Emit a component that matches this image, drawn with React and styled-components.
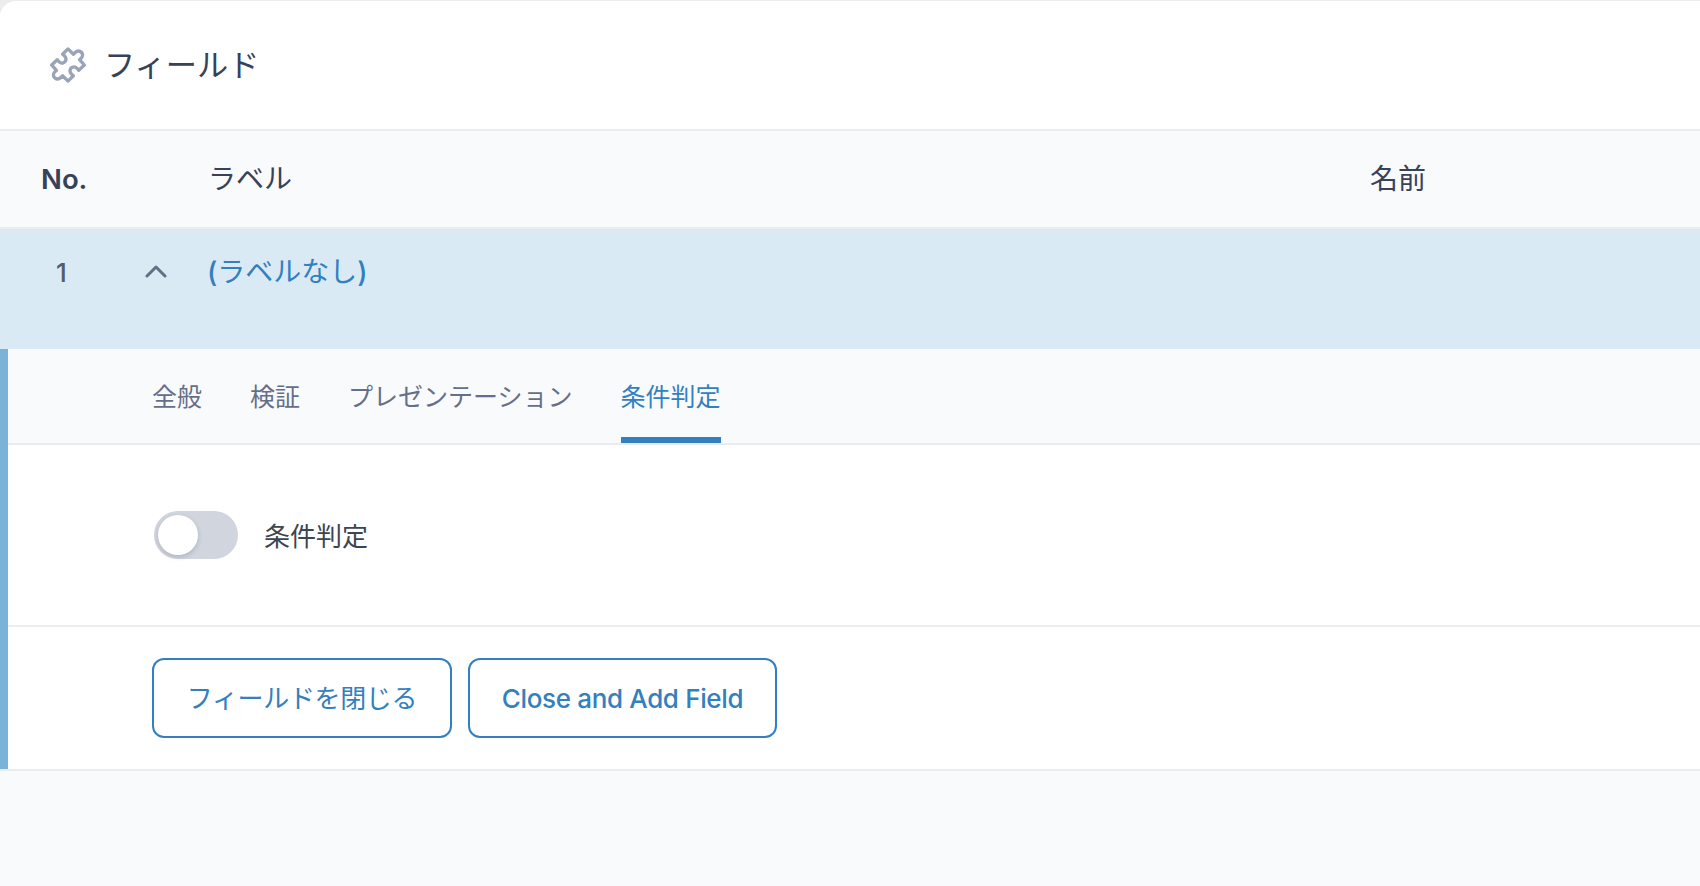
import React from "react";
import styled, { createGlobalStyle } from "styled-components";

const GlobalStyle = createGlobalStyle`
  * { box-sizing: border-box; }
  body {
    margin: 0;
    background: #ececed;
    font-family: Inter, "Noto Sans CJK JP", sans-serif;
    color: #374258;
  }
`;

const Page = styled.div`
  height: 886px;
  padding-top: 1px;
  overflow: hidden;
`;

const Panel = styled.section`
  height: 885px;
  background: #f9fafc;
  border-top-left-radius: 16px;
  overflow: hidden;
`;

const PanelHeader = styled.header`
  display: flex;
  align-items: center;
  gap: 18px;
  height: 130px;
  padding-left: 50px;
  background: #fff;
  border-bottom: 2px solid #eaecf0;
`;

const Title = styled.h2`
  margin: 0;
  font-size: 31.2px;
  font-weight: 400;
  line-height: 40px;
`;

const TableHead = styled.div`
  display: grid;
  grid-template-columns: 208px 1162px 1fr;
  align-items: center;
  height: 98px;
  border-bottom: 2px solid #eaecf0;
  font-size: 28px;
`;

const NumberHeading = styled.div`
  padding-left: 41px;
  font-size: 27.5px;
  font-weight: 600;
`;

const Heading = styled.div`
  padding-bottom: 5px;
`;

const FieldRow = styled.div`
  display: grid;
  grid-template-columns: 145px 62px 1fr;
  align-items: center;
  height: 120px;
  padding-bottom: 37px;
  background: #daeaf5;
`;

const RowNumber = styled.div`
  padding: 4px 0 0 56px;
  color: #555d66;
  font-size: 26px;
  font-weight: 500;
`;

const FieldLabel = styled.div`
  padding-bottom: 2px;
  color: #3380c0;
  font-size: 28px;
  font-weight: 500;

  span { font-weight: 400; }
`;

const Editor = styled.div`
  height: 420px;
  background: #fff;
  border-left: 8px solid #7ab2d8;
`;

const Tabs = styled.nav`
  display: flex;
  gap: 48px;
  height: 96px;
  padding-left: 144px;
  background: #f9fafc;
  border-bottom: 2px solid #e9ebef;
`;

const Tab = styled.div`
  height: 94px;
  padding-top: 29px;
  border-bottom: 6px solid ${({ $active }) => ($active ? "#3380c0" : "transparent")};
  color: ${({ $active }) => ($active ? "#3380c0" : "#656f88")};
  font-size: 25px;
  line-height: 38px;
`;

const Settings = styled.div`
  display: flex;
  align-items: flex-start;
  gap: 26px;
  height: 182px;
  padding: 66px 0 0 146px;
  border-bottom: 2px solid #eaecf0;
`;

const Switch = styled.div`
  width: 84px;
  height: 48px;
  padding: 4px;
  border-radius: 24px;
  background: #d0d5de;
`;

const Knob = styled.div`
  width: 40px;
  height: 40px;
  border-radius: 50%;
  background: #fff;
  box-shadow: 0 2px 5px rgba(40, 50, 70, 0.2);
`;

const SwitchLabel = styled.div`
  padding-top: 6px;
  color: #3c4550;
  font-size: 26px;
  line-height: 40px;
`;

const Actions = styled.div`
  display: flex;
  gap: 16px;
  padding: 31px 0 0 144px;
`;

const ActionButton = styled.button`
  width: ${({ $width }) => $width}px;
  height: 80px;
  padding: 0 0 ${({ $lift }) => $lift || 0}px;
  border: 2px solid #3380c0;
  border-radius: 12px;
  background: #fff;
  color: #3380c0;
  font-family: inherit;
  font-size: 26px;
  font-weight: ${({ $weight }) => $weight};
  letter-spacing: -0.35px;
`;

const Footer = styled.div`
  height: 117px;
  border-top: 2px solid #eaecf0;
`;

function PuzzleIcon() {
  return (
    <svg width="36" height="36" viewBox="0 0 36 36" fill="none" stroke="#9aa4b8" strokeWidth="3.3" strokeLinejoin="round">
      <path d="M18 1.9L23.4 7.2L25.5 5.2A4.2 4.2 0 0 1 32.6 8.2C32.6 10.2 31.2 11.2 29.6 12.6L34.3 18L28.8 23.3L26.8 21.1A4 4 0 0 0 20 24C20 25.7 21.2 27.1 23.4 28.8L18 34.1L12.6 28.8L10.5 30.8A4.2 4.2 0 0 1 3.4 27.8C3.4 25.8 4.8 24.8 6.4 23.4L1.7 18L7.2 12.7L9.2 14.9A4 4 0 0 0 16 12C16 10.3 14.8 8.9 12.6 7.2Z" />
    </svg>
  );
}

function ChevronIcon() {
  return (
    <svg width="22" height="14" viewBox="0 0 22 14" fill="none" stroke="#656f84" strokeWidth="3" strokeLinecap="round" strokeLinejoin="round">
      <path d="M2 12L11 3L20 12" />
    </svg>
  );
}

export default function App() {
  return (
    <>
      <GlobalStyle />
      <Page>
        <Panel>
          <PanelHeader>
            <PuzzleIcon />
            <Title>フィールド</Title>
          </PanelHeader>
          <TableHead>
            <NumberHeading>No.</NumberHeading>
            <Heading>ラベル</Heading>
            <Heading>名前</Heading>
          </TableHead>
          <FieldRow>
            <RowNumber>1</RowNumber>
            <ChevronIcon />
            <FieldLabel>(<span>ラベルなし</span>)</FieldLabel>
          </FieldRow>
          <Editor>
            <Tabs>
              <Tab>全般</Tab>
              <Tab>検証</Tab>
              <Tab>プレゼンテーション</Tab>
              <Tab $active>条件判定</Tab>
            </Tabs>
            <Settings>
              <Switch><Knob /></Switch>
              <SwitchLabel>条件判定</SwitchLabel>
            </Settings>
            <Actions>
              <ActionButton $width={300} $weight={400} $lift={4}>フィールドを閉じる</ActionButton>
              <ActionButton $width={309} $weight={500}>Close and Add Field</ActionButton>
            </Actions>
          </Editor>
          <Footer />
        </Panel>
      </Page>
    </>
  );
}
